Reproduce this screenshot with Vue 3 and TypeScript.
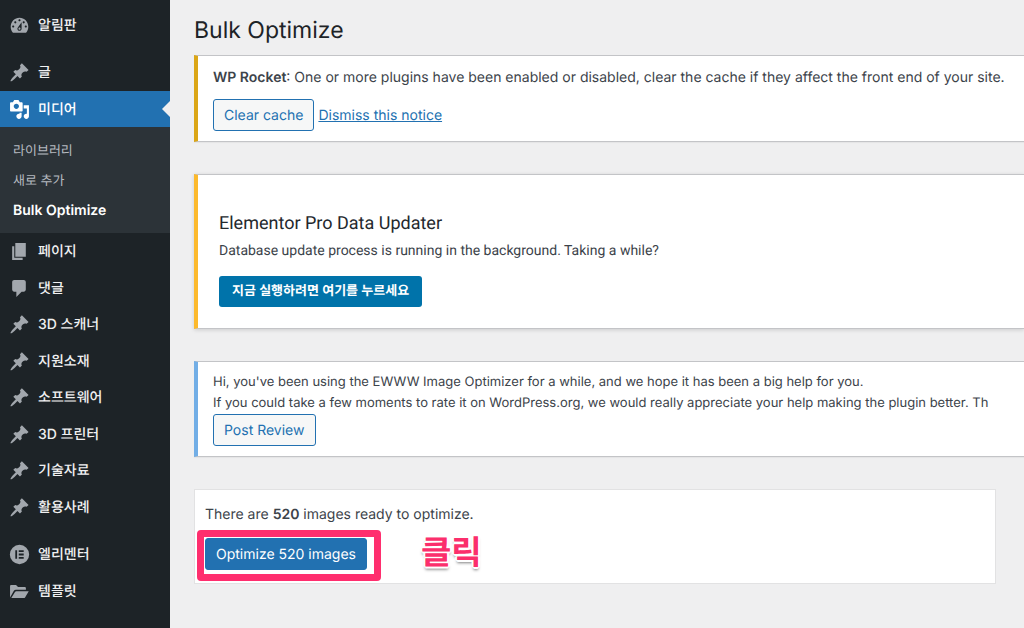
<script setup lang="ts">
type IconName = 'dashboard' | 'pin' | 'media' | 'page' | 'comment' | 'elementor' | 'folder'

interface MenuItem {
  label: string
  icon: IconName
  current?: boolean
  spaced?: boolean
  children?: { label: string; current?: boolean }[]
}

const icons: Record<IconName, string> = {
  dashboard:
    'M3.76 17h12.48c1.34-1.57 2.15-3.6 2.15-5.81 0-4.97-3.76-8.6-8.39-8.6s-8.39 3.63-8.39 8.6c0 2.21.81 4.24 2.15 5.81zM10 4c.55 0 1 .45 1 1s-.45 1-1 1-1-.45-1-1 .45-1 1-1zM6 6c.55 0 1 .45 1 1s-.45 1-1 1-1-.45-1-1 .45-1 1-1zm8 0c.55 0 1 .45 1 1s-.45 1-1 1-1-.45-1-1 .45-1 1-1zm-5.37 5.55L12 7v6c0 1.1-.9 2-2 2s-2-.9-2-2c0-.57.24-1.08.63-1.45zM4 10c.55 0 1 .45 1 1s-.45 1-1 1-1-.45-1-1 .45-1 1-1zm12 0c.55 0 1 .45 1 1s-.45 1-1 1-1-.45-1-1 .45-1 1-1zm-5 3c0-.55-.45-1-1-1s-1 .45-1 1 .45 1 1 1 1-.45 1-1z',
  pin: 'M10.44 3.02l1.82-1.82 6.36 6.35-1.83 1.82c-1.05-.68-2.48-.57-3.41.36l-.75.75c-.92.93-1.04 2.35-.35 3.41l-1.83 1.82-2.41-2.41-2.8 2.79c-.42.42-3.38 2.71-3.8 2.29s1.86-3.39 2.28-3.81l2.79-2.79L4.1 9.36l1.83-1.82c1.05.69 2.48.57 3.4-.36l.75-.75c.93-.92 1.05-2.35.36-3.41z',
  media:
    'M13 11V4c0-.55-.45-1-1-1h-1.67L9 1H5L3.67 3H2c-.55 0-1 .45-1 1v7c0 .55.45 1 1 1h10c.55 0 1-.45 1-1zM7 4.5c1.38 0 2.5 1.12 2.5 2.5S8.38 9.5 7 9.5 4.5 8.38 4.5 7 5.62 4.5 7 4.5zM14 6h5v10.5c0 1.38-1.12 2.5-2.5 2.5S14 17.88 14 16.5s1.12-2.5 2.5-2.5c.17 0 .34.02.5.05V9h-3V6zm-4 8.05V13h2v3.5c0 1.38-1.12 2.5-2.5 2.5S7 17.88 7 16.5 8.12 14 9.5 14c.17 0 .34.02.5.05z',
  page: 'M6 15V2h10v13H6zm-1 1h8v2H3V5h2v11z',
  comment: 'M5 2h9c1.1 0 2 .9 2 2v7c0 1.1-.9 2-2 2h-2l-5 5v-5H5c-1.1 0-2-.9-2-2V4c0-1.1.9-2 2-2z',
  elementor:
    'M10 .8a9.2 9.2 0 1 0 0 18.4A9.2 9.2 0 0 0 10 .8zM6 6h1.7v8H6zM9.3 6H14v1.7H9.3zM9.3 9.15H14v1.7H9.3zM9.3 12.3H14V14H9.3z',
  folder:
    'M1 15.6V5c0-.8.5-1.3 1.3-1.3h4.4l1.9 1.9h6.2c.8 0 1.3.5 1.3 1.3v1.5H6.6c-.9 0-1.6.4-2.1 1.1zM2.2 16.3l3.5-5.9c.3-.5.7-.7 1.3-.7h11.8l-3.5 5.9c-.3.5-.7.7-1.3.7z',
}

const menu: MenuItem[] = [
  { label: '알림판', icon: 'dashboard' },
  { label: '글', icon: 'pin', spaced: true },
  {
    label: '미디어',
    icon: 'media',
    current: true,
    children: [{ label: '라이브러리' }, { label: '새로 추가' }, { label: 'Bulk Optimize', current: true }],
  },
  { label: '페이지', icon: 'page' },
  { label: '댓글', icon: 'comment' },
  { label: '3D 스캐너', icon: 'pin' },
  { label: '지원소재', icon: 'pin' },
  { label: '소프트웨어', icon: 'pin' },
  { label: '3D 프린터', icon: 'pin' },
  { label: '기술자료', icon: 'pin' },
  { label: '활용사례', icon: 'pin' },
  { label: '엘리멘터', icon: 'elementor', spaced: true },
  { label: '템플릿', icon: 'folder' },
]

const imageCount = 520
</script>

<template>
  <div class="admin">
    <nav class="sidebar">
      <ul class="menu">
        <li v-for="item in menu" :key="item.label" :class="{ spaced: item.spaced }">
          <a href="#" class="menu-link" :class="{ current: item.current }">
            <svg class="icon" viewBox="0 0 20 20" aria-hidden="true">
              <path :d="icons[item.icon]" fill-rule="evenodd" />
            </svg>
            <span>{{ item.label }}</span>
          </a>
          <ul v-if="item.children" class="submenu">
            <li v-for="child in item.children" :key="child.label">
              <a href="#" :class="{ current: child.current }">{{ child.label }}</a>
            </li>
          </ul>
        </li>
      </ul>
    </nav>

    <main class="content">
      <h1>Bulk Optimize</h1>

      <section class="notice warning">
        <p><strong>WP Rocket</strong>: One or more plugins have been enabled or disabled, clear the cache if they affect the front end of your site.</p>
        <div class="actions">
          <button type="button" class="button">Clear cache</button>
          <a href="#">Dismiss this notice</a>
        </div>
      </section>

      <section class="notice elementor">
        <h2>Elementor Pro Data Updater</h2>
        <p>Database update process is running in the background. Taking a while?</p>
        <button type="button" class="button-run">지금 실행하려면 여기를 누르세요</button>
      </section>

      <section class="notice info">
        <p>Hi, you've been using the EWWW Image Optimizer for a while, and we hope it has been a big help for you.</p>
        <p>If you could take a few moments to rate it on WordPress.org, we would really appreciate your help making the plugin better. Th</p>
        <button type="button" class="button">Post Review</button>
      </section>

      <section class="card">
        <p>There are <strong>{{ imageCount }}</strong> images ready to optimize.</p>
        <div class="optimize">
          <div class="target">
            <button type="button" class="button primary">Optimize {{ imageCount }} images</button>
          </div>
          <span class="callout">클릭</span>
        </div>
      </section>
    </main>
  </div>
</template>

<style>
body {
  margin: 0;
  background: #efeff0;
}
</style>

<style scoped>
.admin {
  display: flex;
  min-height: 100vh;
  overflow: hidden;
  background: #efeff0;
  color: #3c434a;
  font-family: Inter, "Noto Sans CJK KR", sans-serif;
  font-size: 14px;
  line-height: 21px;
  text-rendering: geometricPrecision;
}

h1,
h2,
p,
ul {
  margin: 0;
  padding: 0;
}

ul {
  list-style: none;
}

button {
  font: inherit;
  text-rendering: inherit;
  cursor: pointer;
}

strong {
  font-weight: 600;
}

.sidebar {
  flex: 0 0 170px;
  background: #1d2327;
}

.menu {
  padding: 7px 0 16px;
}

.menu > .spaced {
  margin-top: 11px;
}

.menu-link {
  position: relative;
  display: flex;
  align-items: center;
  gap: 8px;
  height: 36px;
  padding-left: 9px;
  color: #f0f0f1;
  font-weight: 500;
  text-decoration: none;
}

.menu > li:nth-child(even) > .menu-link {
  height: 37px;
}

.icon {
  width: 21px;
  height: 21px;
  fill: #a2a7ad;
}

.menu-link.current {
  background: #2271b1;
  color: #fff;
}

.menu-link.current .icon {
  fill: #fff;
}

.menu-link.current::after {
  content: "";
  position: absolute;
  top: 50%;
  right: 0;
  margin-top: -8px;
  border: 8px solid transparent;
  border-left-width: 0;
  border-right-color: #efeff0;
}

.submenu {
  padding: 9px 0 7px;
  background: #2c3338;
}

.submenu a {
  display: block;
  padding: 5px 13px;
  color: #b5bac0;
  font-size: 13px;
  line-height: 20px;
  text-decoration: none;
}

.submenu a.current {
  color: #fff;
  font-size: 14px;
  font-weight: 600;
}

.content {
  flex: 1;
  min-width: 0;
  padding: 14px 0 44px 24px;
}

h1 {
  margin-bottom: 9px;
  color: #1d2327;
  font-size: 23px;
  font-weight: 400;
  line-height: 32px;
}

.notice {
  margin-bottom: 32px;
  padding: 11px 15px;
  border: 1px solid #c3c4c7;
  border-right: 0;
  border-left: 4px solid #dba617;
  background: #fff;
  box-shadow: 0 1px 1px rgba(0, 0, 0, 0.04);
  white-space: nowrap;
}

.warning {
  padding-bottom: 10px;
}

.actions {
  display: flex;
  align-items: center;
  gap: 4px;
  margin-top: 11px;
}

.actions a {
  color: #2271b1;
}

.button {
  height: 32px;
  padding: 0 10px;
  border: 1px solid #2271b1;
  border-radius: 3px;
  background: #f6f7f7;
  color: #2271b1;
}

.elementor {
  padding: 38px 21px 21px;
  border-left-color: #fcb92c;
  box-shadow: 0 1px 4px rgba(0, 0, 0, 0.15);
  font-family: Roboto, "Noto Sans CJK KR", sans-serif;
}

.elementor h2 {
  margin-bottom: 6px;
  color: #23282d;
  font-size: 18px;
  font-weight: 400;
  line-height: 22px;
}

.button-run {
  display: block;
  height: 31px;
  margin-top: 14px;
  padding: 0 13px;
  border: 0;
  border-radius: 3px;
  background: #0073aa;
  color: #fff;
  font-size: 13px;
  font-weight: 700;
}

.info {
  padding-top: 10px;
  padding-bottom: 10px;
  border-left-color: #72aee6;
}

.info p {
  font-size: 13px;
}

.info .button {
  display: block;
}

.card {
  margin-right: 28px;
  padding: 14px 10px 13px;
  border: 1px solid #e2e2e3;
  background: #fff;
}

.optimize {
  display: flex;
  align-items: flex-start;
  gap: 54px;
  margin-top: 13px;
}

.target {
  position: relative;
}

.target::after {
  content: "";
  position: absolute;
  inset: -8px -14px -11px -8px;
  border: 7px solid #ff2e6e;
  border-radius: 4px;
  pointer-events: none;
}

.button.primary {
  display: block;
  background: #2271b1;
  color: #fff;
}

.callout {
  color: #fb2f6c;
  font-size: 33px;
  font-weight: 700;
  line-height: 28px;
  text-shadow: -2px 0 #fff, 2px 0 #fff, 0 -2px #fff, 0 2px #fff, -1px -1px #fff, 1px 1px #fff, 1px -1px #fff,
    -1px 1px #fff, 0 3px 3px rgba(0, 0, 0, 0.5);
}
</style>
